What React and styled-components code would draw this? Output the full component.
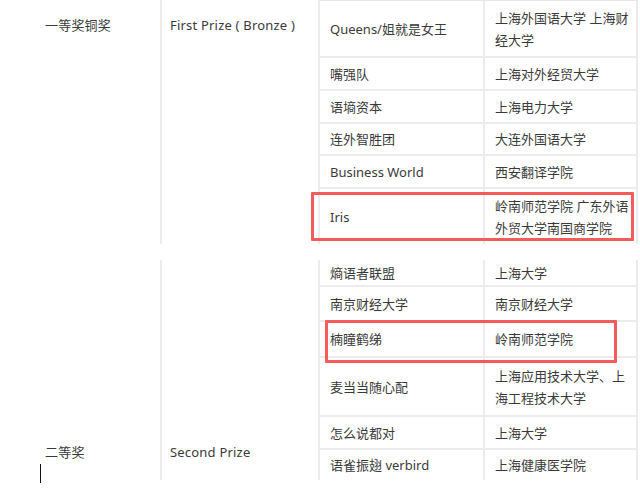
import React from 'react';
import styled, { createGlobalStyle } from 'styled-components';

const GlobalStyle = createGlobalStyle`
* {
  box-sizing: border-box;
}
body {
  margin: 0;
  background: #fff;
  font-family: "Noto Sans", "Noto Sans CJK SC", sans-serif;
  font-size: 13px;
  color: #3a3a3a;
}
`;

const Page = styled.div`
  position: relative;
  width: 640px;
  height: 495px;
  overflow: hidden;
`;

const Section = styled.div`
  display: flex;
  margin-top: ${p => p.$gap || 0}px;
`;

const TitleCell = styled.div`
  display: flex;
  flex-direction: column;
  justify-content: ${p => (p.$bottom ? 'flex-end' : 'flex-start')};
  width: ${p => p.$w}px;
  padding: ${p => (p.$bottom ? '0 0 17px' : '14px 0 0')} ${p => p.$pl}px;
  border-right: 2px solid #ececec;
  line-height: 22px;
  white-space: nowrap;
  letter-spacing: 0.2px;
`;

const Rows = styled.div`
  display: flex;
  flex-direction: column;
  width: 318px;
  border-top: ${p => (p.$top ? '1px solid #e8e8e8' : 'none')};
`;

const Row = styled.div`
  display: grid;
  grid-template-columns: 165px 153px;
  height: ${p => p.$h}px;
  border-bottom: ${p => (p.$last ? 'none' : '2px solid #ececec')};
`;

const Cell = styled.div`
  display: flex;
  align-items: center;
  padding: 0 0 0 10px;
  line-height: 22px;
  word-break: break-all;
  border-right: 2px solid #ececec;
`;

const Highlight = styled.div`
  position: absolute;
  left: ${p => p.$x}px;
  top: ${p => p.$y}px;
  width: ${p => p.$w}px;
  height: ${p => p.$h}px;
  border: 3px solid #f45b5b;
  border-radius: 1px;
`;

const Caret = styled.div`
  position: absolute;
  left: 40px;
  top: 464px;
  width: 1px;
  height: 19px;
  background: #111;
`;

const first = [
  { team: 'Queens/姐就是女王', school: '上海外国语大学 上海财经大学', h: 57 },
  { team: '嘴强队', school: '上海对外经贸大学', h: 33 },
  { team: '语墒资本', school: '上海电力大学', h: 33 },
  { team: '连外智胜团', school: '大连外国语大学', h: 32 },
  { team: 'Business World', school: '西安翻译学院', h: 33 },
  { team: 'Iris', school: '岭南师范学院 广东外语外贸大学南国商学院', h: 55 },
];

const second = [
  { team: '熵语者联盟', school: '上海大学', h: 27 },
  { team: '南京财经大学', school: '南京财经大学', h: 35 },
  { team: '楠瞳鹤绨', school: '岭南师范学院', h: 36 },
  { team: '麦当当随心配', school: '上海应用技术大学、上海工程技术大学', h: 59 },
  { team: '怎么说都对', school: '上海大学', h: 33 },
  { team: '语雀振翅 verbird', school: '上海健康医学院', h: 30 },
];

function Block({ award, english, rows, bottom, top, gap }) {
  return (
    <Section $gap={gap}>
      <TitleCell $w={162} $pl={45} $bottom={bottom}>{award}</TitleCell>
      <TitleCell $w={158} $pl={8} $bottom={bottom}>{english}</TitleCell>
      <Rows $top={top}>
        {rows.map((r, i) => (
          <Row key={i} $h={r.h} $last={i === rows.length - 1}>
            <Cell>{r.team}</Cell>
            <Cell>{r.school}</Cell>
          </Row>
        ))}
      </Rows>
    </Section>
  );
}

export default function App() {
  return (
    <Page>
      <GlobalStyle />
      <Block award="一等奖铜奖" english="First Prize ( Bronze )" rows={first} top />
      <Block award="二等奖" english="Second Prize" rows={second} bottom gap={16} />
      <Highlight $x={311} $y={192} $w={323} $h={49} />
      <Highlight $x={325} $y={320} $w={292} $h={43} />
      <Caret />
    </Page>
  );
}
